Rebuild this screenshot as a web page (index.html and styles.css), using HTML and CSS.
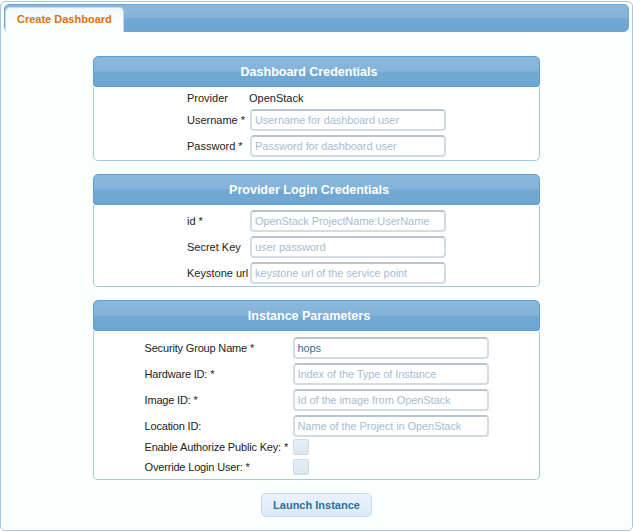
FILE: index.html
```html
<!DOCTYPE html>
<html>
<head>
<meta charset="utf-8">
<title>Create Dashboard</title>
<link rel="stylesheet" href="styles.css">
</head>
<body>
<div class="tabs">
  <div class="tabbar">
    <div class="tab">Create Dashboard</div>
  </div>
  <div class="tab-panel">
    <section class="panel panel-first">
      <h3 class="panel-head">Dashboard Credentials</h3>
      <div class="panel-body">
        <div class="form-grid narrow">
          <div class="label text-row">Provider</div>
          <div class="value text-row">OpenStack</div>
          <label class="label">Username *</label>
          <div class="field"><input class="input" type="text" placeholder="Username for dashboard user"></div>
          <label class="label">Password *</label>
          <div class="field"><input class="input" type="password" placeholder="Password for dashboard user"></div>
        </div>
      </div>
    </section>

    <section class="panel panel-second">
      <h3 class="panel-head">Provider Login Credentials</h3>
      <div class="panel-body">
        <div class="form-grid narrow">
          <label class="label">id *</label>
          <div class="field"><input class="input" type="text" placeholder="OpenStack ProjectName:UserName"></div>
          <label class="label">Secret Key</label>
          <div class="field"><input class="input" type="text" placeholder="user password"></div>
          <label class="label">Keystone url</label>
          <div class="field"><input class="input" type="text" placeholder="keystone url of the service point"></div>
        </div>
      </div>
    </section>

    <section class="panel panel-third">
      <h3 class="panel-head">Instance Parameters</h3>
      <div class="panel-body">
        <div class="form-grid wide">
          <label class="label">Security Group Name *</label>
          <div class="field"><input class="input" type="text" value="hops"></div>
          <label class="label">Hardware ID: *</label>
          <div class="field"><input class="input" type="text" placeholder="Index of the Type of Instance"></div>
          <label class="label">Image ID: *</label>
          <div class="field"><input class="input" type="text" placeholder="Id of the image from OpenStack"></div>
          <label class="label">Location ID:</label>
          <div class="field"><input class="input" type="text" placeholder="Name of the Project in OpenStack"></div>
          <label class="label check-label">Enable Authorize Public Key: *</label>
          <div class="check-field"><input class="check" type="checkbox"></div>
          <label class="label check-label">Override Login User: *</label>
          <div class="check-field"><input class="check" type="checkbox"></div>
        </div>
      </div>
    </section>

    <div class="actions">
      <button class="button" type="button">Launch Instance</button>
    </div>
  </div>
</div>
</body>
</html>
```
FILE: styles.css
```css
html, body {
  margin: 0;
  padding: 0;
  background: #ffffff;
}

body {
  font-family: "Liberation Sans", Arial, sans-serif;
  font-size: 11px;
  color: #222222;
}

.tabs {
  box-sizing: border-box;
  margin-top: 1px;
  width: 633px;
  height: 530px;
  border: 1px solid #a6c9e2;
  border-radius: 5px;
  background: #fcfdfd;
  padding: 2px 3px;
}

.tabbar {
  box-sizing: border-box;
  height: 28px;
  border: 1px solid #6fa6d4;
  border-radius: 5px;
  background: linear-gradient(to bottom, #8ab8dd 0%, #84b3da 48%, #72a9d3 52%, #6ea6d2 100%);
  padding: 2px 0 0 0;
  display: flex;
  align-items: flex-end;
}

.tab {
  box-sizing: border-box;
  height: 25px;
  margin-bottom: -1px;
  padding: 0 11px;
  border: 1px solid #c5dbec;
  border-bottom: 0;
  border-radius: 5px 5px 0 0;
  background: linear-gradient(to bottom, #f4f8fb, #fcfdfd 60%);
  color: #e17009;
  font-weight: bold;
  font-size: 11px;
  line-height: 23px;
}

.tab-panel {
  padding-top: 24px;
  display: flex;
  flex-direction: column;
  align-items: center;
}

.panel {
  width: 447px;
  margin-bottom: 13px;
}

.panel-head {
  box-sizing: border-box;
  margin: 0;
  height: 31px;
  padding: 1px 15px 0 0;
  border: 1px solid #5a9fd6;
  border-radius: 5px 5px 3px 3px;
  background: linear-gradient(to bottom, #8ab8dd 0%, #84b3da 48%, #72a9d3 52%, #6ea6d2 100%);
  color: #ffffff;
  font-size: 12.5px;
  font-weight: bold;
  text-align: center;
  line-height: 29px;
}

.panel-body {
  border: 1px solid #a6c9e2;
  border-top: 0;
  border-radius: 0 0 5px 5px;
  background: #ffffff;
  padding-top: 3px;
}

.panel-first .panel-body {
  padding-top: 2px;
  padding-bottom: 1px;
}

.panel-third .panel-body {
  padding-top: 4px;
}

.form-grid {
  display: grid;
  justify-content: center;
  align-items: center;
}

.form-grid.narrow {
  grid-template-columns: 63px 196px;
}

.form-grid.wide {
  grid-template-columns: 148px 196px;
}

.label {
  color: #222222;
  white-space: nowrap;
  font-size: 11px;
}

.form-grid.wide .label {
  letter-spacing: -0.17px;
}

.text-row {
  height: 18px;
  line-height: 18px;
}

.value {
  margin-left: -1px;
  color: #222222;
}

.field {
  height: 26px;
  display: flex;
  align-items: center;
}

.input {
  box-sizing: border-box;
  width: 196px;
  height: 22px;
  margin: 0;
  padding: 0 3px;
  border: 2px solid #d4dce3;
  border-top-color: #b9c4ce;
  border-radius: 4px;
  background: #ffffff;
  font-family: "Liberation Sans", Arial, sans-serif;
  font-size: 11px;
  letter-spacing: -0.08px;
  color: #2e6e9e;
  outline: none;
}

.input::placeholder {
  color: #a5bdd4;
  opacity: 1;
}

.check-field {
  height: 20px;
  display: flex;
  align-items: flex-start;
}

.check-label {
  align-self: start;
  line-height: 16px;
}

.check {
  -webkit-appearance: none;
  appearance: none;
  box-sizing: border-box;
  width: 16px;
  height: 16px;
  margin: 0;
  border: 1px solid #cbdbe9;
  border-radius: 2px;
  background: linear-gradient(to bottom, #e6eef6, #dbe6f1);
}

.actions {
  display: flex;
  justify-content: center;
}

.button {
  box-sizing: border-box;
  width: 111px;
  height: 24px;
  border: 1px solid #c5dbec;
  border-radius: 5px;
  background: linear-gradient(to bottom, #eaf3fc 0%, #e2eefb 50%, #d9e9f9 100%);
  color: #2e6e9e;
  font-family: "Liberation Sans", Arial, sans-serif;
  font-size: 11px;
  font-weight: bold;
  padding: 0;
  cursor: pointer;
}
```
